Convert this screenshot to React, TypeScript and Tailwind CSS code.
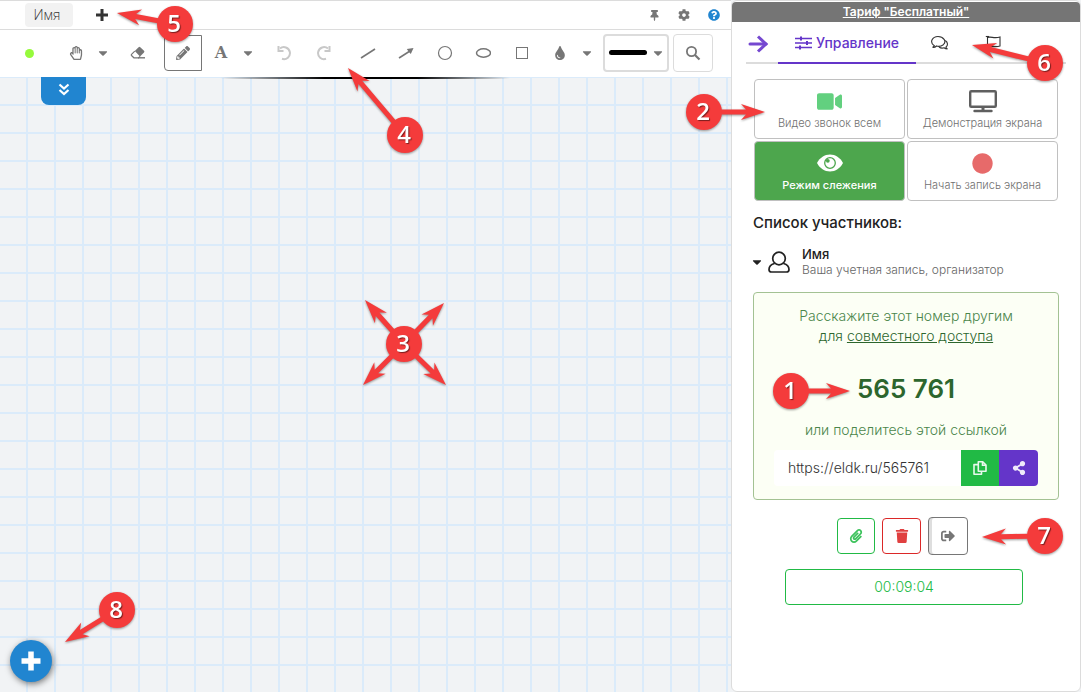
import type { ReactNode } from 'react'
import {
  FaCaretDown,
  FaCircle,
  FaCog,
  FaPaperclip,
  FaPencilAlt,
  FaPlus,
  FaQuestionCircle,
  FaRegHandPaper,
  FaShareAlt,
  FaSignOutAlt,
  FaThumbtack,
  FaTint,
  FaTrash,
  FaVideo,
} from 'react-icons/fa'

type Point = [number, number]

// Numbered marker; arrow tips are given relative to the centre of the circle
function Callout({ n, tips, className }: { n: number; tips: Point[]; className: string }) {
  return (
    <svg
      width="36"
      height="36"
      viewBox="-18 -18 36 36"
      className={`pointer-events-none absolute z-20 overflow-visible drop-shadow-[0_1px_1px_rgba(0,0,0,0.4)] ${className}`}
    >
      {tips.map(([x, y]) => {
        const len = Math.hypot(x, y)
        const angle = (Math.atan2(y, x) * 180) / Math.PI
        return (
          <path
            key={`${x},${y}`}
            transform={`rotate(${angle})`}
            fill="#f43b3b"
            d={`M16 -2.5 L${len - 19} -2.5 L${len - 24} -8 L${len} 0 L${len - 24} 8 L${len - 19} 2.5 L16 2.5 Z`}
          />
        )
      })}
      <circle r="18" fill="#f43b3b" />
      <text
        x="-1"
        y="8"
        textAnchor="middle"
        fill="#fff"
        className="font-['Open_Sans','Noto_Sans',sans-serif] text-[24px] font-semibold [text-shadow:1px_1px_1px_rgba(0,0,0,0.5)]"
      >
        {n}
      </text>
    </svg>
  )
}

function Tool({ label, className = '', children }: { label: string; className?: string; children: ReactNode }) {
  return (
    <button
      type="button"
      aria-label={label}
      className={`flex h-9 w-[38px] shrink-0 items-center justify-center text-[#767676] ${className}`}
    >
      {children}
    </button>
  )
}

function Caret({ label }: { label: string }) {
  return (
    <button type="button" aria-label={label} className="flex h-9 w-4 shrink-0 items-center justify-center text-[#767676]">
      <FaCaretDown size={14} />
    </button>
  )
}

function UndoIcon({ flip = false }: { flip?: boolean }) {
  return (
    <svg width="16" height="16" viewBox="0 0 16 16" fill="none" stroke="#c8c8c8" strokeWidth="2" className={flip ? '-scale-x-100' : ''}>
      <path d="M3 3.6A6 6 0 1 1 5 13.8" />
      <path d="M1.5 1v5h5" />
    </svg>
  )
}

function DrawBar() {
  return (
    <div className="flex h-[47px] items-center bg-white pb-[2px] pl-[10px]">
      <Tool label="Цвет">
        <span className="mt-[2px] h-[9px] w-[9px] rounded-full bg-[#96fa3c]" />
      </Tool>
      <Tool label="Рука" className="ml-[9px]">
        <FaRegHandPaper size={14} />
      </Tool>
      <Caret label="Варианты перемещения" />
      <Tool label="Ластик" className="ml-2">
        <svg width="16" height="14" viewBox="0 0 16 14">
          <path d="M8.6 1.2a1.2 1.2 0 0 1 1.7 0l3.7 3.6a1.2 1.2 0 0 1 0 1.7L10 10.4 4.8 5.1Z" fill="#767676" />
          <path d="M4.8 5.1 1.5 8.4a.8.8 0 0 0 0 1.1l2.4 2.3h4.7L10 10.4" fill="none" stroke="#767676" strokeWidth="1.2" />
          <path d="M8 11.8h7" stroke="#767676" strokeWidth="1.4" />
        </svg>
      </Tool>
      <Tool label="Карандаш" className="ml-[7px] rounded-bl-sm border border-[#767676]">
        <FaPencilAlt size={14} />
      </Tool>
      <Tool label="Текст">
        <span className="font-['DejaVu_Serif','Liberation_Serif',serif] text-base font-bold">А</span>
      </Tool>
      <Caret label="Варианты текста" />
      <Tool label="Отменить" className="ml-[10px]">
        <UndoIcon />
      </Tool>
      <Tool label="Повторить">
        <UndoIcon flip />
      </Tool>
      <Tool label="Линия" className="ml-[7px]">
        <svg width="16" height="14" viewBox="0 0 16 14" stroke="#767676" strokeWidth="1.6">
          <path d="M1 12 15 3" />
        </svg>
      </Tool>
      <Tool label="Стрелка">
        <svg width="16" height="14" viewBox="0 0 16 14" stroke="#767676" strokeWidth="1.6">
          <path d="M1 12 12 5" />
          <path d="M15.5 2 8.8 3l1.7 2.600L12.800 8Z" fill="#767676" stroke="none" />
        </svg>
      </Tool>
      <Tool label="Круг" className="ml-px">
        <svg width="16" height="16" viewBox="0 0 16 16" fill="none" stroke="#767676" strokeWidth="1.2">
          <circle cx="8" cy="8" r="6.5" />
        </svg>
      </Tool>
      <Tool label="Эллипс">
        <svg width="16" height="16" viewBox="0 0 16 16" fill="none" stroke="#767676" strokeWidth="1.5">
          <ellipse cx="8.5" cy="8" rx="7" ry="4.2" />
        </svg>
      </Tool>
      <Tool label="Прямоугольник" className="ml-px">
        <svg width="14" height="14" viewBox="0 0 14 14" fill="none" stroke="#767676">
          <rect x="1.5" y="1.5" width="11" height="11" />
        </svg>
      </Tool>
      <Tool label="Заливка">
        <FaTint size={14} />
      </Tool>
      <Caret label="Варианты заливки" />
      <button
        type="button"
        aria-label="Толщина линии"
        aria-haspopup="listbox"
        className="ml-2 flex h-[38px] w-[66px] shrink-0 items-center justify-between rounded border-2 border-[#dcdcdc] pl-1 pr-[2px] text-[#767676]"
      >
        <span className="h-[5px] w-[38px] rounded-full bg-black" />
        <FaCaretDown size={14} />
      </button>
      <button
        type="button"
        aria-label="Масштаб"
        className="ml-1 flex h-[38px] w-10 shrink-0 items-center justify-center rounded border border-[#dcdcdc] text-[#767676]"
      >
        <svg width="16" height="16" viewBox="0 0 16 16" fill="none" stroke="currentColor">
          <circle cx="6.5" cy="6.5" r="4.6" strokeWidth="1.8" />
          <path d="m10 10 4.5 4.5" strokeWidth="2.2" />
        </svg>
      </button>
    </div>
  )
}

function ActionCard({ icon, label, active = false }: { icon: ReactNode; label: string; active?: boolean }) {
  return (
    <button
      type="button"
      className={`flex h-[60px] flex-col items-center rounded border border-[#c0c0c0] pt-[9px] text-[11px] leading-4 ${
        active ? 'bg-[#4da64d] font-medium text-white' : 'bg-white font-light text-[#707070]'
      }`}
    >
      <span className="flex h-6 items-center justify-center">{icon}</span>
      <span className="mt-[2px] whitespace-nowrap">{label}</span>
    </button>
  )
}

function MonitorIcon() {
  return (
    <svg width="28" height="24" viewBox="0 0 28 24" fill="none" stroke="#5f5f5f">
      <rect x="1.2" y="2.2" width="25.6" height="15.6" rx="1" strokeWidth="2.4" />
      <path d="M14 18v4" strokeWidth="3" />
      <path d="M5.5 22h17" strokeWidth="2.4" strokeLinecap="round" />
    </svg>
  )
}

function EyeIcon() {
  return (
    <svg width="26" height="18" viewBox="0 0 26 18" fill="none">
      <path d="M0 9C3 3.5 7.500.5 13 .5S23 3.500 26 9c-3 5.500-7.500 8.500-13 8.500S3 14.500 0 9Z" fill="#fff" />
      <circle cx="13" cy="9" r="5.3" stroke="#4da64d" strokeWidth="1.3" />
      <circle cx="10.8" cy="6.8" r="1.9" fill="#4da64d" />
    </svg>
  )
}

function CopyIcon() {
  return (
    <svg width="14" height="14" viewBox="0 0 14 14" fill="none" stroke="currentColor" strokeWidth="1.6">
      <path d="M5.300.8h4.400l3.300 3.300v6.100H5.300Z" strokeLinejoin="round" />
      <path d="M9.500.8v3.500H13" />
      <path d="M5 3.600H1v9.600h7.500v-3" strokeLinejoin="round" />
    </svg>
  )
}

function SidePanel() {
  return (
    <aside className="relative w-[350px] shrink-0 rounded-md border border-[#dcdcdc] bg-white font-['Inter','Open_Sans',sans-serif]">
      <div className="mt-px flex h-5 items-center justify-center rounded-t bg-[#757575]">
        <a href="#tariff" className="text-xs font-semibold text-white underline">
          Тариф "Бесплатный"
        </a>
      </div>

      <nav className="mx-[14px] flex h-[42px] border-b-2 border-[#dcdcdc]">
        <button type="button" aria-label="Свернуть" className="flex w-8 items-center pt-1 pl-px">
          <svg width="22" height="20" viewBox="0 0 22 20" fill="none" stroke="#7548d0" strokeWidth="3">
            <path d="M3 10h16" strokeLinecap="round" />
            <path d="m11 2.500 8 7.500-8 7.500" />
          </svg>
        </button>
        <a
          href="#control"
          className="-mb-[2px] flex w-[138px] items-center justify-center gap-1 border-b-2 border-[#6435c9] pt-[2px] text-sm font-medium text-[#6435c9]"
        >
          <svg width="17" height="14" viewBox="0 0 17 14" stroke="#6435c9" strokeWidth="1.6">
            <path d="M0 2.500h17M0 7h17M0 11.500h17" />
            <path d="M6 .5v4M12 5v4M5 9.500v4" strokeWidth="2" />
          </svg>
          Управление
        </a>
        <a href="#chat" aria-label="Чат" className="flex w-12 items-center justify-center pt-[2px]">
          <svg width="18" height="16" viewBox="0 0 18 16" fill="none" stroke="#333" strokeWidth="1.1">
            <path d="M3.300 10.800C-2 7 1.500 1.500 7 1.500s9 5 5.300 8.200C10 11.500 7 11.500 5.500 11c-1 1-2.500 1.500-4 1.300 1-.3 1.500-.8 1.800-1.500Z" />
            <path d="M14.300 5.500c3 2 2.600 5 .6 6.700.2.700.8 1.300 1.600 1.700-1.500 0-2.500-.3-3.500-1.100-1.700.5-3.500.3-5-.8" />
          </svg>
        </a>
        <a href="#flags" aria-label="Флаги" className="ml-[5px] flex w-12 items-center justify-center pt-[2px]">
          <svg width="16" height="16" viewBox="0 0 16 16" fill="none" stroke="#333" strokeWidth="1.1">
            <path d="M2.500 1v14M2.500 2.500c4-1.500 6 1.500 12.500-.5v9c-6 2-8.500-1-12.500.5" />
            <path d="M.8 1.500h3.400" />
          </svg>
        </a>
      </nav>

      <div className="mx-[22px] mt-[15px] grid grid-cols-2 gap-x-[2px] gap-y-[2px]">
        <ActionCard label="Видео звонок всем" icon={<FaVideo size={25} color="#62d07f" />} />
        <ActionCard label="Демонстрация экрана" icon={<MonitorIcon />} />
        <ActionCard active label="Режим слежения" icon={<EyeIcon />} />
        <ActionCard label="Начать запись экрана" icon={<FaCircle size={21} color="#e76a6a" />} />
      </div>

      <div className="mx-[21px]">
        <h2 className="mt-3 text-[15px] leading-5 font-medium text-[#222]">Список участников:</h2>
        <div className="mt-[13px] flex items-center">
          <FaCaretDown size={14} className="-ml-[3px] text-[#222]" />
          <svg width="22" height="22" viewBox="0 0 22 22" fill="none" stroke="#222" strokeWidth="1.7" className="ml-1">
            <circle cx="11" cy="7.500" r="6.300" />
            <path d="M6.500 12.500C3 13.500 1 15.500 1 18.500c0 1.500 1 2.500 2.500 2.500h15c1.500 0 2.500-1 2.500-2.500 0-3-2-5-5.500-6" />
          </svg>
          <div className="ml-3 leading-4">
            <div className="text-[13px] font-medium text-[#222]">Имя</div>
            <div className="whitespace-nowrap text-xs leading-4 font-light text-[#666]">Ваша учетная запись, организатор</div>
          </div>
        </div>

        <section className="mt-[14px] rounded border border-[#a3c293] bg-[#fcfff5] px-5 pt-[13px] pb-[13px] text-center text-sm leading-5 font-light text-[#4b864b]">
          <p>
            Расскажите этот номер другим
            <br />
            <span className="text-[#2c662d]">
              для{' '}
              <a href="#share" className="underline">
                совместного доступа
              </a>
            </span>
          </p>
          <p className="mt-[23px] text-[26px] leading-10 font-semibold text-[#2c662d]">565 761</p>
          <p className="mt-[11px]">или поделитесь этой ссылкой</p>
          <div className="mt-[10px] flex h-9">
            <input
              aria-label="Ссылка"
              readOnly
              value="https://eldk.ru/565761"
              className="min-w-0 flex-1 rounded-l bg-white px-[14px] text-sm font-light text-[#333] outline-none"
            />
            <button type="button" aria-label="Копировать" className="flex w-[38px] items-center justify-center bg-[#21ba45] text-[#e8f8ec]">
              <CopyIcon />
            </button>
            <button type="button" aria-label="Поделиться" className="flex w-[39px] items-center justify-center rounded-r bg-[#6435c9] text-[#efe9fa]">
              <FaShareAlt size={14} />
            </button>
          </div>
        </section>
      </div>

      <div className="mt-[17px] ml-[105px] flex items-center">
        <button type="button" aria-label="Прикрепить файл" className="flex h-9 w-[38px] items-center justify-center rounded border border-[#21ba45] text-[#3ec35d]">
          <FaPaperclip size={14} />
        </button>
        <button type="button" aria-label="Удалить" className="ml-[7px] flex h-9 w-[39px] items-center justify-center rounded border border-[#db2828] text-[#e04040]">
          <FaTrash size={14} />
        </button>
        <button type="button" aria-label="Выйти" className="ml-[7px] flex h-[38px] w-10 items-center justify-center rounded border border-[#767676] text-[#767676] shadow-[inset_3px_0_0_#dedede]">
          <FaSignOutAlt size={14} />
        </button>
      </div>
      <button
        type="button"
        className="mt-[14px] ml-[53px] flex h-9 w-[238px] items-center justify-center rounded border border-[#21ba45] text-sm font-light text-[#21ba45]"
      >
        00:09:04
      </button>

      <Callout n={6} tips={[[-73, -18]]} className="top-11 right-[17px]" />
      <Callout n={2} tips={[[61, 0]]} className="top-[93px] -left-[46px]" />
      <Callout n={1} tips={[[59, 0]]} className="top-[372px] left-[41px]" />
      <Callout n={7} tips={[[-63, 1]]} className="top-[517px] right-[17px]" />
    </aside>
  )
}

export default function App() {
  return (
    <div className="flex min-h-screen bg-[#f1f3f5] font-['Open_Sans','Noto_Sans',sans-serif]">
      <main className="relative flex min-w-0 flex-1 flex-col">
        <header className="flex h-[30px] items-center border-y border-[#dcdcdc] bg-white pr-[11px] pl-[25px]">
          <button type="button" className="h-6 w-12 rounded bg-[#f2f2f2] pr-1 text-sm font-light text-[#333]">
            Имя
          </button>
          <button type="button" aria-label="Добавить вкладку" className="ml-[22px] text-[#333]">
            <svg width="14" height="14" viewBox="0 0 14 14" stroke="currentColor" strokeWidth="3">
              <path d="M7 1v12M1 7h12" />
            </svg>
          </button>
          <div className="ml-auto flex items-center gap-[18px] text-[#767676]">
            <button type="button" aria-label="Закрепить">
              <FaThumbtack size={11} />
            </button>
            <button type="button" aria-label="Настройки">
              <FaCog size={12} />
            </button>
            <button type="button" aria-label="Помощь" className="text-[#2185d0]">
              <FaQuestionCircle size={12} />
            </button>
          </div>
        </header>
        <DrawBar />

        <div className="relative flex-1 bg-[linear-gradient(to_right,#dbebfa_2px,transparent_2px),linear-gradient(to_bottom,#dbebfa_2px,transparent_2px)] bg-[size:28px_28px] bg-[position:26px_27px]">
          <div className="absolute top-0 left-[220px] h-[2px] w-[290px] bg-[linear-gradient(to_right,transparent,#000_36%,#000_68%,transparent)]" />
          <button type="button" aria-label="Развернуть" className="ml-[41px] flex h-7 w-[45px] items-center justify-center rounded-b-lg bg-[#2185d0] pb-1">
            <svg width="12" height="13" viewBox="0 0 12 13" fill="none" stroke="#fff" strokeWidth="2.2">
              <path d="m1.500 1.500 4.500 4 4.500-4M1.500 7l4.500 4 4.500-4" />
            </svg>
          </button>
          <button
            type="button"
            aria-label="Добавить"
            className="absolute bottom-[10px] left-[10px] flex h-[42px] w-[42px] items-center justify-center rounded-full bg-[#2185d0] text-white shadow-[1px_2px_6px_rgba(0,0,0,0.5)]"
          >
            <svg width="20" height="20" viewBox="0 0 20 20" fill="none" stroke="currentColor" strokeWidth="5.500">
              <path d="M10 .5v19M.5 10h19" />
            </svg>
          </button>
        </div>

        <Callout n={5} tips={[[-58, -11]]} className="top-[6px] left-[157px]" />
        <Callout n={4} tips={[[-57, -67]]} className="top-[117px] left-[387px]" />
        <Callout n={3} tips={[[-39, -44], [40, -41], [-41, 41], [42, 41]]} className="top-[326px] left-[386px]" />
        <Callout n={8} tips={[[-52, 32]]} className="bottom-16 left-[99px]" />
      </main>
      <SidePanel />
    </div>
  )
}
